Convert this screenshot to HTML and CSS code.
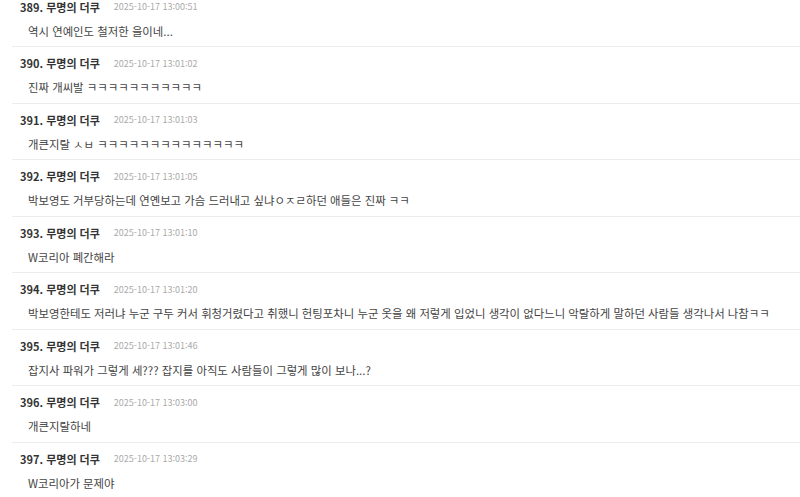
FILE: index.html
```html
<!DOCTYPE html>
<html lang="ko">
<head>
<meta charset="utf-8">
<link rel="stylesheet" href="styles.css">
</head>
<body>
<ul class="comments">
  <li class="comment">
    <div class="head"><span class="author">389. 무명의 더쿠</span><span class="date">2025-10-17 13:00:51</span></div>
    <div class="text">역시 연예인도 철저한 을이네...</div>
  </li>
  <li class="comment">
    <div class="head"><span class="author">390. 무명의 더쿠</span><span class="date">2025-10-17 13:01:02</span></div>
    <div class="text">진짜 개씨발 ㅋㅋㅋㅋㅋㅋㅋㅋㅋㅋㅋ</div>
  </li>
  <li class="comment">
    <div class="head"><span class="author">391. 무명의 더쿠</span><span class="date">2025-10-17 13:01:03</span></div>
    <div class="text">개큰지랄 ㅅㅂ ㅋㅋㅋㅋㅋㅋㅋㅋㅋㅋㅋㅋㅋㅋ</div>
  </li>
  <li class="comment">
    <div class="head"><span class="author">392. 무명의 더쿠</span><span class="date">2025-10-17 13:01:05</span></div>
    <div class="text">박보영도 거부당하는데 연옌보고 가슴 드러내고 싶냐ㅇㅈㄹ하던 애들은 진짜 ㅋㅋ</div>
  </li>
  <li class="comment">
    <div class="head"><span class="author">393. 무명의 더쿠</span><span class="date">2025-10-17 13:01:10</span></div>
    <div class="text">W코리아 폐간해라</div>
  </li>
  <li class="comment">
    <div class="head"><span class="author">394. 무명의 더쿠</span><span class="date">2025-10-17 13:01:20</span></div>
    <div class="text">박보영한테도 저러냐 누군 구두 커서 휘청거렸다고 취했니 헌팅포차니 누군 옷을 왜 저렇게 입었니 생각이 없다느니 악랄하게 말하던 사람들 생각나서 나참ㅋㅋ</div>
  </li>
  <li class="comment">
    <div class="head"><span class="author">395. 무명의 더쿠</span><span class="date">2025-10-17 13:01:46</span></div>
    <div class="text">잡지사 파워가 그렇게 세??? 잡지를 아직도 사람들이 그렇게 많이 보나...?</div>
  </li>
  <li class="comment">
    <div class="head"><span class="author">396. 무명의 더쿠</span><span class="date">2025-10-17 13:03:00</span></div>
    <div class="text">개큰지랄하네</div>
  </li>
  <li class="comment">
    <div class="head"><span class="author">397. 무명의 더쿠</span><span class="date">2025-10-17 13:03:29</span></div>
    <div class="text">W코리아가 문제야</div>
  </li>
</ul>
</body>
</html>
```

FILE: styles.css
```css
html, body {
  margin: 0;
  padding: 0;
  background: #fff;
  overflow: hidden;
}
body {
  font-family: "Noto Sans CJK KR", "Noto Sans", sans-serif;
  color: #333;
}
.comments {
  list-style: none;
  margin: -9.5px 0 0 12px;
  padding: 0;
}
.comment {
  box-sizing: border-box;
  height: 56.5px;
  border-bottom: 1.5px solid #ececec;
  display: flex;
  flex-direction: column;
}
.head {
  display: flex;
  align-items: center;
  height: 16px;
  margin-top: 8px;
  padding-left: 8px;
  gap: 14px;
}
.author {
  font-size: 11px;
  font-weight: 700;
  color: #333;
}
.date {
  font-size: 9px;
  color: #aaa;
}
.text {
  display: flex;
  align-items: center;
  height: 16px;
  margin-top: 8px;
  padding-left: 16px;
  font-size: 11.4px;
  color: #444;
  white-space: nowrap;
}
```
